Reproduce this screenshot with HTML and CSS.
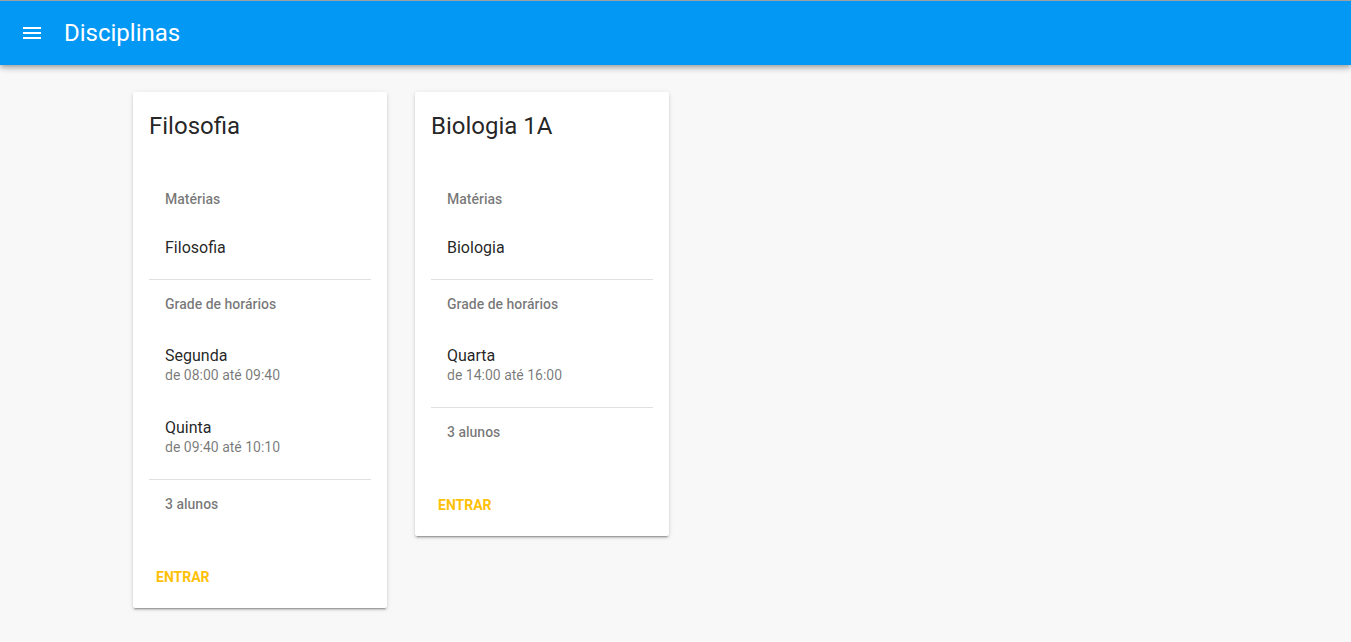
FILE: index.html
```html
<!DOCTYPE html>
<html lang="pt">
<head>
<meta charset="utf-8">
<title>Disciplinas</title>
<link rel="stylesheet" href="styles.css">
</head>
<body>
<header class="toolbar">
  <button class="menu-btn" aria-label="Menu">
    <svg viewBox="0 0 24 24" width="24" height="24"><path d="M3 18h18v-2H3v2zm0-5h18v-2H3v2zm0-7v2h18V6H3z" fill="#fff"/></svg>
  </button>
  <h1 class="toolbar-title">Disciplinas</h1>
</header>
<main class="content">
  <section class="card">
    <h2 class="card-title">Filosofia</h2>
    <div class="card-body">
      <div class="list list-first">
        <div class="subheader">Matérias</div>
        <div class="item">Filosofia</div>
      </div>
      <hr class="divider">
      <div class="list list-schedule">
        <div class="subheader">Grade de horários</div>
        <div class="item two-line">
          <div class="item-title">Segunda</div>
          <div class="item-sub">de 08:00 até 09:40</div>
        </div>
        <div class="item two-line">
          <div class="item-title">Quinta</div>
          <div class="item-sub">de 09:40 até 10:10</div>
        </div>
      </div>
      <hr class="divider">
      <div class="list">
        <div class="subheader">3 alunos</div>
      </div>
    </div>
    <div class="card-actions"><button class="btn">Entrar</button></div>
  </section>
  <section class="card">
    <h2 class="card-title">Biologia 1A</h2>
    <div class="card-body">
      <div class="list list-first">
        <div class="subheader">Matérias</div>
        <div class="item">Biologia</div>
      </div>
      <hr class="divider">
      <div class="list list-schedule">
        <div class="subheader">Grade de horários</div>
        <div class="item two-line">
          <div class="item-title">Quarta</div>
          <div class="item-sub">de 14:00 até 16:00</div>
        </div>
      </div>
      <hr class="divider">
      <div class="list">
        <div class="subheader">3 alunos</div>
      </div>
    </div>
    <div class="card-actions"><button class="btn">Entrar</button></div>
  </section>
</main>
</body>
</html>
```
FILE: styles.css
```css
* { box-sizing: border-box; }
html, body {
  margin: 0;
  padding: 0;
  background: #f8f8f8;
  font-family: Roboto, "Liberation Sans", sans-serif;
  color: rgba(0,0,0,.87);
}
body { border-top: 1px solid #a0a0a0; min-height: 100vh; }
.toolbar {
  height: 64px;
  background: #0398f4;
  display: flex;
  align-items: center;
  padding: 0 20px;
  box-shadow: 0 2px 4px -1px rgba(0,0,0,.2), 0 4px 5px 0 rgba(0,0,0,.14), 0 1px 10px 0 rgba(0,0,0,.12);
  position: relative;
}
.menu-btn {
  width: 24px;
  height: 24px;
  padding: 0;
  border: 0;
  background: none;
  display: flex;
}
.toolbar-title {
  margin: 0 0 0 20px;
  font-size: 24px;
  font-weight: 400;
  color: #fff;
  line-height: 32px;
}
.content {
  display: flex;
  align-items: flex-start;
  gap: 28px;
  padding: 27px 0 0 133px;
}
.card {
  width: 254px;
  background: #fff;
  border-radius: 2px;
  box-shadow: 0 3px 1px -2px rgba(0,0,0,.2), 0 2px 2px 0 rgba(0,0,0,.14), 0 1px 5px 0 rgba(0,0,0,.12);
}
.card-title {
  margin: 0;
  padding: 18px 16px 0;
  font-size: 24px;
  font-weight: 400;
  line-height: 32px;
  color: rgba(0,0,0,.87);
}
.card-body { padding: 25px 16px 0; }
.list { padding: 0 0 8px; }
.list-first { padding-top: 8px; }
.list-schedule { padding-bottom: 7px; }
.subheader {
  height: 48px;
  display: flex;
  align-items: center;
  padding: 0 16px;
  font-size: 14px;
  font-weight: 500;
  color: rgba(0,0,0,.54);
}
.item {
  height: 48px;
  display: flex;
  align-items: center;
  padding: 0 16px;
  font-size: 16px;
}
.item.two-line {
  height: 72px;
  flex-direction: column;
  align-items: flex-start;
  justify-content: flex-start;
  padding-top: 18px;
}
.item-title { font-size: 16px; line-height: 20px; }
.item-sub { font-size: 14px; line-height: 18px; color: rgba(0,0,0,.54); }
.divider {
  margin: 0;
  border: 0;
  border-top: 1px solid rgba(0,0,0,.12);
  height: 0;
}
.card-actions { padding: 23px 7px 13px; display: flex; }
.btn {
  height: 36px;
  padding: 0 16px;
  border: 0;
  background: none;
  font-family: inherit;
  font-size: 14px;
  font-weight: 700;
  text-transform: uppercase;
  color: #ffc107;
}
```
